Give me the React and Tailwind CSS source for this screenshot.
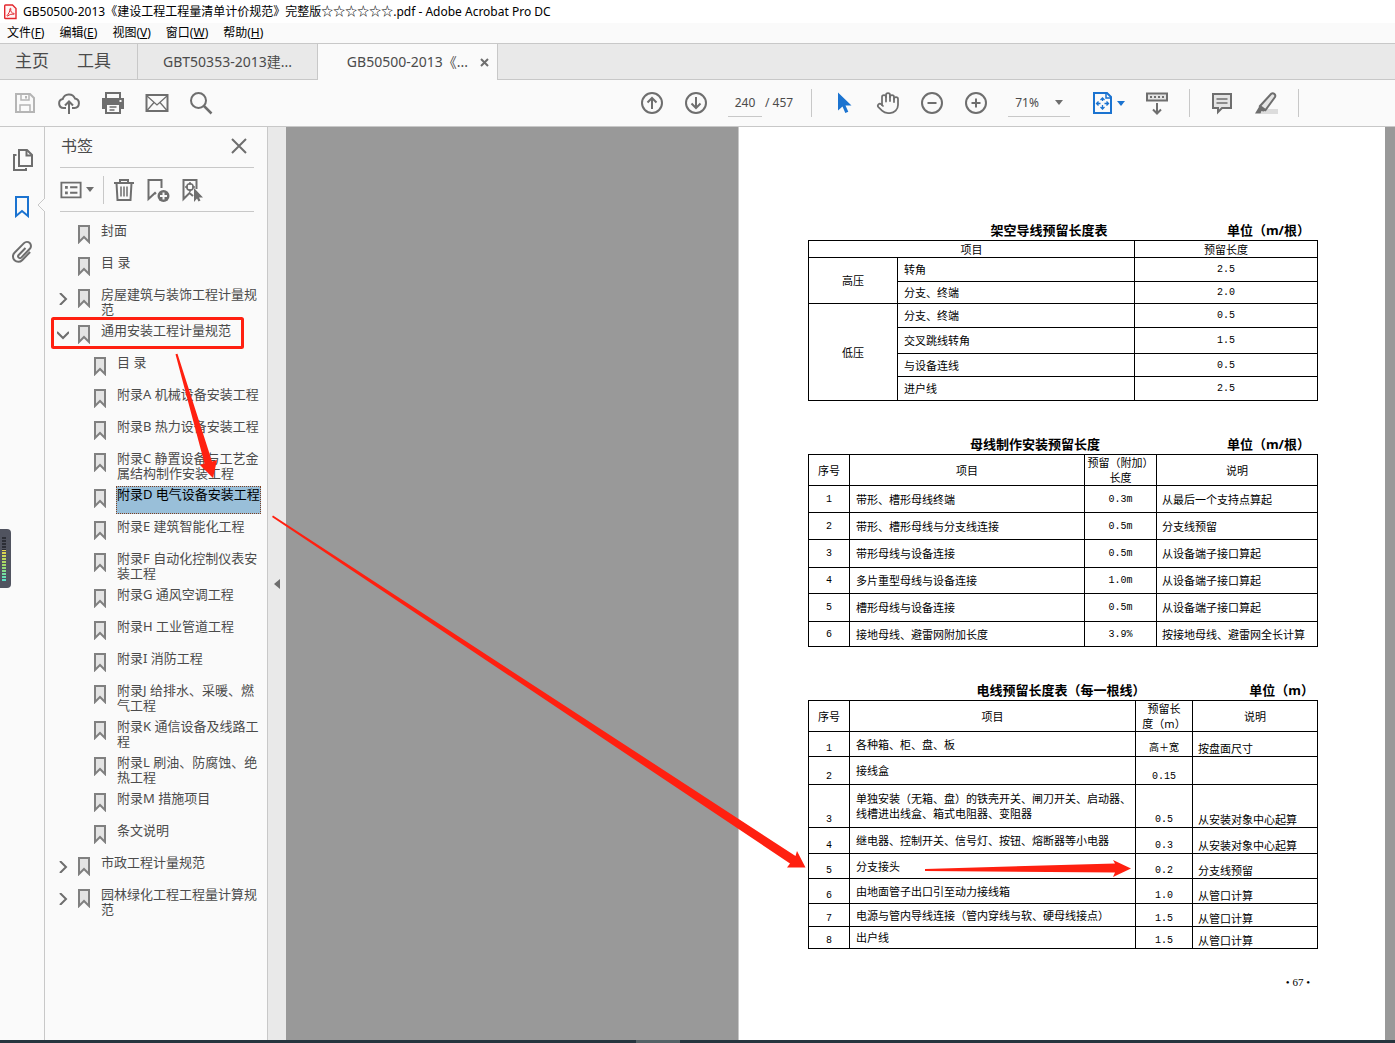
import { useState } from 'react'
import { Hand } from 'lucide-react'

const menus = [
  { label: '文件', key: 'F' },
  { label: '编辑', key: 'E' },
  { label: '视图', key: 'V' },
  { label: '窗口', key: 'W' },
  { label: '帮助', key: 'H' },
]

const bookmarks = [
  { title: '封面' },
  { title: '目 录' },
  { title: '房屋建筑与装饰工程计量规范', arrow: 'right' },
  { title: '通用安装工程计量规范', arrow: 'down' },
  { title: '目 录', child: true },
  { title: '附录A 机械设备安装工程', child: true },
  { title: '附录B 热力设备安装工程', child: true },
  { title: '附录C 静置设备与工艺金属结构制作安装工程', child: true },
  { title: '附录D 电气设备安装工程', child: true },
  { title: '附录E 建筑智能化工程', child: true },
  { title: '附录F 自动化控制仪表安装工程', child: true },
  { title: '附录G 通风空调工程', child: true },
  { title: '附录H 工业管道工程', child: true },
  { title: '附录I 消防工程', child: true },
  { title: '附录J 给排水、采暖、燃气工程', child: true },
  { title: '附录K 通信设备及线路工程', child: true },
  { title: '附录L 刷油、防腐蚀、绝热工程', child: true },
  { title: '附录M 措施项目', child: true },
  { title: '条文说明', child: true },
  { title: '市政工程计量规范', arrow: 'right' },
  { title: '园林绿化工程工程量计算规范', arrow: 'right' },
]

const overhead = [
  { group: '高压', span: 2, name: '转角', value: '2.5', h: 'h-6' },
  { name: '分支、终端', value: '2.0', h: 'h-[22px]' },
  { group: '低压', span: 4, name: '分支、终端', value: '0.5', h: 'h-6' },
  { name: '交叉跳线转角', value: '1.5', h: 'h-[26px]' },
  { name: '与设备连线', value: '0.5', h: 'h-[23px]' },
  { name: '进户线', value: '2.5', h: 'h-6' },
]

const busbar = [
  { name: '带形、槽形母线终端', value: '0.3m', note: '从最后一个支持点算起', h: 'h-[27px]' },
  { name: '带形、槽形母线与分支线连接', value: '0.5m', note: '分支线预留', h: 'h-[27px]' },
  { name: '带形母线与设备连接', value: '0.5m', note: '从设备端子接口算起', h: 'h-7' },
  { name: '多片重型母线与设备连接', value: '1.0m', note: '从设备端子接口算起', h: 'h-[26px]' },
  { name: '槽形母线与设备连接', value: '0.5m', note: '从设备端子接口算起', h: 'h-7' },
  { name: '接地母线、避雷网附加长度', value: '3.9%', note: '按接地母线、避雷网全长计算', h: 'h-[25px]' },
]

const wires = [
  { name: '各种箱、柜、盘、板', value: '高＋宽', note: '按盘面尺寸', h: 'h-[25px]' },
  { name: '接线盒', value: '0.15', note: '', h: 'h-7' },
  { name: '单独安装（无箱、盘）的铁壳开关、闸刀开关、启动器、线槽进出线盒、箱式电阻器、变阻器', value: '0.5', note: '从安装对象中心起算', h: 'h-[43px]' },
  { name: '继电器、控制开关、信号灯、按钮、熔断器等小电器', value: '0.3', note: '从安装对象中心起算', h: 'h-[26px]' },
  { name: '分支接头', value: '0.2', note: '分支线预留', h: 'h-[25px]' },
  { name: '由地面管子出口引至动力接线箱', value: '1.0', note: '从管口计算', h: 'h-[25px]' },
  { name: '电源与管内导线连接（管内穿线与软、硬母线接点）', value: '1.5', note: '从管口计算', h: 'h-[23px]' },
  { name: '出户线', value: '1.5', note: '从管口计算', h: 'h-[22px]' },
]

const TABLE = 'w-full table-fixed border-collapse text-[11px] leading-[15px]'
const CELL = 'border border-black p-0 font-normal'
const NUM = "border border-black p-0 text-center font-['Liberation_Mono','Noto_Sans_CJK_SC',monospace] text-[10px]"

function Icon({ className = 'size-6', children }) {
  return (
    <svg viewBox="0 0 24 24" className={className} fill="none" stroke="currentColor" strokeWidth="2" aria-hidden="true">
      {children}
    </svg>
  )
}

function ToolButton({ label, className = '', children }) {
  return (
    <button type="button" aria-label={label} className={`flex shrink-0 items-center justify-center ${className}`}>
      {children}
    </button>
  )
}

function Caret({ className = '' }) {
  return (
    <svg viewBox="0 0 8 5" className={`h-[5px] w-2 ${className}`} fill="currentColor" aria-hidden="true">
      <path d="M0 0h8L4 5z" />
    </svg>
  )
}

function TitleBar() {
  return (
    <header className="flex h-[23px] items-center gap-1.5 bg-white pl-1 text-xs text-black">
      <svg viewBox="0 0 13 16" className="h-4 w-[13px]" aria-hidden="true">
        <path d="M1.5 1h7l3.5 3.500v10H1.500a.8.8 0 0 1-.8-.8V1.800a.8.8 0 0 1 .8-.8z" fill="#fff5f5" stroke="#e3262d" strokeWidth="1.400" />
        <path d="M3 11.500c1.500-1.500 3-4 3-6.500 0-1 1-1 .8.200-.6 2.300 1 4 3 4.200.9.200.7 1-.2.900-2-.4-4 .2-5.600 1.500-.7.500-1.300 0-1-.3z" fill="none" stroke="#e3262d" strokeWidth="1" />
      </svg>
      <h1 className="whitespace-nowrap">GB50500-2013《建设工程工程量清单计价规范》完整版☆☆☆☆☆☆.pdf - Adobe Acrobat Pro DC</h1>
    </header>
  )
}

function MenuBar() {
  return (
    <nav className="flex h-5 items-center gap-[15px] bg-[#fafafa] pl-[7px] text-xs text-black">
      {menus.map(m => (
        <button type="button" key={m.key} className="whitespace-nowrap">
          {m.label}(<span className="underline">{m.key}</span>)
        </button>
      ))}
    </nav>
  )
}

function TabBar() {
  return (
    <div className="flex h-[37px] border-t border-[#c8c8c8] bg-[#e9e9e9] text-sm text-[#4b4b4b]">
      <div className="flex w-[138px] items-center gap-7 border-r border-b border-[#c8c8c8] pl-[15px] text-[17px]">
        <button type="button">主页</button>
        <button type="button">工具</button>
      </div>
      <button type="button" className="w-[180px] border-r border-b border-[#c8c8c8] text-center whitespace-nowrap">
        GBT50353-2013建...
      </button>
      <div className="flex w-[180px] items-center justify-end gap-3 border-r border-[#c8c8c8] bg-[#fafafa] pr-2">
        <button type="button" className="whitespace-nowrap">GB50500-2013《...</button>
        <button type="button" aria-label="关闭标签">
          <svg viewBox="0 0 9 9" className="size-[9px]" stroke="#6e6e6e" strokeWidth="2" aria-hidden="true">
            <path d="M1 1l7 7M8 1L1 8" />
          </svg>
        </button>
      </div>
      <div className="flex-1 border-b border-[#c8c8c8]" />
    </div>
  )
}

function Toolbar() {
  return (
    <div className="flex h-[47px] items-center border-b border-[#c8c8c8] bg-[#fafafa] text-[#6e6e6e]">
      <div className="flex w-[640px] items-center gap-5 pl-[13px]">
        <ToolButton label="保存" className="text-[#b5b5b5]">
          <Icon>
            <path d="M3 3h14l4 4v14H3z" />
            <path d="M8 3v6h8V3M7 21v-7h10v7" strokeWidth="1.500" />
            <path d="M13 5v2.500" />
          </Icon>
        </ToolButton>
        <ToolButton label="上传">
          <Icon>
            <path d="M9 17H6.500a4.500 4.500 0 0 1-.8-8.900A6.500 6.500 0 0 1 18 7.500a4.800 4.800 0 0 1-.5 9.500H15" />
            <path d="M12 23V11M8 14.500l4-4 4 4" />
          </Icon>
        </ToolButton>
        <ToolButton label="打印">
          <Icon>
            <path d="M5 7V2h14v5" fill="#fafafa" />
            <path d="M1 7h22v11H1z" fill="currentColor" stroke="none" />
            <path d="M5 13h14v9H5z" fill="#fafafa" />
            <path d="M8.500 16h7M8.500 19h5" strokeWidth="1.500" />
            <path d="M18.500 10h2" stroke="#fafafa" />
          </Icon>
        </ToolButton>
        <ToolButton label="电子邮件">
          <Icon>
            <path d="M1.500 4h21v16h-21z" />
            <path d="M2 5l10 9 10-9M2 19.500l7-8M22 19.500l-7-8" strokeWidth="1.300" />
          </Icon>
        </ToolButton>
        <ToolButton label="查找">
          <Icon>
            <circle cx="9.500" cy="9.500" r="7.500" />
            <path d="M15 15l7.500 7.500" strokeWidth="2.500" />
          </Icon>
        </ToolButton>
      </div>

      <div className="flex items-center gap-5">
        <ToolButton label="上一页">
          <Icon>
            <circle cx="12" cy="12" r="10" />
            <path d="M12 18V7M7.500 11.500L12 7l4.500 4.500" />
          </Icon>
        </ToolButton>
        <ToolButton label="下一页">
          <Icon>
            <circle cx="12" cy="12" r="10" />
            <path d="M12 6v11M7.500 12.500L12 17l4.500-4.500" />
          </Icon>
        </ToolButton>
        <div className="flex items-center gap-[3px] text-xs text-[#4b4b4b]">
          <input aria-label="页码" defaultValue="240" className="h-7 w-[34px] border-b border-[#c8c8c8] bg-transparent text-center" />
          <span className="whitespace-nowrap">/ 457</span>
        </div>
      </div>
      <span className="mr-5 ml-[18px] h-7 w-px shrink-0 bg-[#c8c8c8]" />
      <div className="flex items-center gap-5">
        <ToolButton label="选择工具" className="text-[#1b73d0]">
          <Icon>
            <path d="M6 1.500v18l4.500-4 2.800 6.500 3-1.300-2.800-6.200h6z" fill="currentColor" stroke="none" />
          </Icon>
        </ToolButton>
        <ToolButton label="抓手工具">
          <Hand className="size-6" strokeWidth={1.75} />
        </ToolButton>
        <ToolButton label="缩小">
          <Icon>
            <circle cx="12" cy="12" r="10" />
            <path d="M7.500 12h9" />
          </Icon>
        </ToolButton>
        <ToolButton label="放大">
          <Icon>
            <circle cx="12" cy="12" r="10" />
            <path d="M7.500 12h9M12 7.500v9" />
          </Icon>
        </ToolButton>
        <button type="button" className="flex h-7 w-[62px] items-center justify-between border-b border-[#c8c8c8] px-[7px] text-xs text-[#4b4b4b]">
          71%
          <Caret className="text-[#6e6e6e]" />
        </button>
        <button type="button" aria-label="适合页面" className="ml-px flex items-center gap-0.5 text-[#1b73d0]">
          <Icon>
            <path d="M3 2h13l4 4v16H3z" />
            <path d="M15 2v5h5" strokeWidth="1.500" />
            <path d="M11.500 7v3M11.500 14v4M5.500 12.500h4M13.500 12.500h4M9.500 9l2-2 2 2M9.500 16l2 2 2-2M7.500 10.500l-2 2 2 2M15.500 10.500l2 2-2 2" strokeWidth="1.300" />
          </Icon>
          <Caret />
        </button>
        <ToolButton label="滚动模式">
          <Icon>
            <path d="M2 2.500h20v7H2z" fill="#e4e4e4" />
            <path d="M5 6h14" strokeDasharray="2 2" />
            <path d="M12 12v10M8 18.500l4 4 4-4" />
          </Icon>
        </ToolButton>
      </div>
      <span className="mx-5 h-7 w-px shrink-0 bg-[#c8c8c8]" />
      <div className="flex items-center gap-5">
        <ToolButton label="批注">
          <Icon>
            <path d="M3 3h18v14h-9l-4 4v-4H3z" fill="#e4e4e4" />
            <path d="M6.500 8h11M6.500 12h11" strokeWidth="1.500" />
          </Icon>
        </ToolButton>
        <ToolButton label="荧光笔">
          <Icon>
            <path d="M9 18h15v5H6z" fill="#dcdcdc" stroke="none" />
            <path d="M6 15L17 3c2.200-1.800 5.200.5 4 3L11.500 19z" fill="#e4e4e4" />
            <path d="M5.500 15l6.500 4.500-2.500 1-2-.5-1 2.500H1z" fill="currentColor" stroke="none" />
          </Icon>
        </ToolButton>
      </div>
      <span className="ml-5 h-7 w-px shrink-0 bg-[#c8c8c8]" />
    </div>
  )
}

function Rail() {
  return (
    <aside className="relative flex w-[45px] shrink-0 flex-col items-center gap-[22px] border-r border-[#c8c8c8] bg-[#fafafa] pt-[21px] text-[#6e6e6e]">
      <ToolButton label="页面缩略图">
        <Icon>
          <path d="M9 2h8l5 5v11H9z" />
          <path d="M16.500 2v5.500H22M6.500 7H4v15h12v-2" />
        </Icon>
      </ToolButton>
      <ToolButton label="书签" className="text-[#1b73d0]">
        <Icon>
          <path d="M6 3h12v19l-6-5-6 5z" />
        </Icon>
      </ToolButton>
      <ToolButton label="附件">
        <Icon>
          <path d="M15.500 8l-6.800 7a1.800 1.800 0 0 0 2.600 2.600l8.500-8.800a4 4 0 0 0-5.800-5.700L4.500 12.700a5.300 5.300 0 0 0 7.600 7.500l8-8.200" />
        </Icon>
      </ToolButton>
      <svg viewBox="0 0 8 14" className="absolute top-[71px] -right-px h-3.5 w-2" aria-hidden="true">
        <path d="M8 0L1 7l7 7" fill="#fafafa" stroke="#c8c8c8" />
      </svg>
      {/* level meter docked on the screen edge */}
      <div className="absolute top-[402px] left-0 flex h-[59px] w-[11px] items-center justify-end rounded-r bg-[#50535f] pr-[5px]">
        <div className="h-[46px] w-1 bg-[repeating-linear-gradient(to_bottom,#50535f_0_1px,transparent_1px_3px),linear-gradient(to_bottom,#2c2e36_0_14px,#e8d24a_14px,#9bdc6c_30px,#4fe0d0)]" />
      </div>
    </aside>
  )
}

function BookmarkRow({ item, selected, onSelect }) {
  return (
    <li className={`mb-1 flex items-start ${item.child ? 'pl-12' : 'pl-8'}`}>
      <span className="relative shrink-0">
        {item.arrow && (
          <svg viewBox="0 0 12 12" className="absolute top-[7px] -left-5 size-3" fill="none" stroke="#6e6e6e" strokeWidth="2" aria-hidden="true">
            <path d={item.arrow === 'down' ? 'M0 3l6 6 6-6' : 'M3 0l6 6-6 6'} />
          </svg>
        )}
        <svg viewBox="0 0 14 20" className="mt-0.5 h-5 w-3.5" fill="#e4e4e4" stroke="#808080" strokeWidth="2" aria-hidden="true">
          <path d="M2 2h10v16l-5-5-5 5z" />
        </svg>
      </span>
      <button
        type="button"
        onClick={onSelect}
        className={`ml-[9px] flex min-h-7 items-start border border-dotted text-left text-[13px] leading-[15px] ${item.child ? 'w-[145px]' : 'w-[161px]'} ${selected ? 'border-[#804020] bg-[#99bfd9] text-black' : 'border-transparent text-[#4b4b4b]'}`}
      >
        {item.title}
      </button>
    </li>
  )
}

function BookmarkPanel() {
  const [selected, setSelected] = useState(8)

  return (
    <section className="w-[223px] shrink-0 border-r border-[#c8c8c8] bg-[#fafafa] text-[#6e6e6e]">
      <div className="mr-[13px] ml-[15px] flex h-[41px] items-center justify-between border-b border-[#c8c8c8] pr-[7px] pb-0.5 pl-px">
        <h2 className="text-base text-[#4b4b4b]">书签</h2>
        <button type="button" aria-label="关闭">
          <svg viewBox="0 0 16 16" className="size-4" stroke="currentColor" strokeWidth="2" aria-hidden="true">
            <path d="M1 1l14 14M15 1L1 15" />
          </svg>
        </button>
      </div>
      <div className="mr-[13px] ml-[15px] flex h-11 items-center border-b border-[#c8c8c8]">
        <button type="button" aria-label="选项" className="flex items-center gap-1">
          <Icon className="h-6 w-[22px]">
            <path d="M1.500 4h21v16h-21z" />
            <path d="M5.500 9h3M5.500 15h3" strokeWidth="3" />
            <path d="M11 9h8M11 15h8" />
          </Icon>
          <Caret />
        </button>
        <span className="mr-2 ml-[9px] h-7 w-px bg-[#c8c8c8]" />
        <div className="flex items-center gap-2.5">
          <ToolButton label="删除书签">
            <Icon>
              <path d="M2 5h20M8 5V2h8v3M4.500 5l1 17h13l1-17" />
              <path d="M9 8.500v10M12 8.500v10M15 8.500v10" strokeWidth="1.500" />
            </Icon>
          </ToolButton>
          <ToolButton label="新建书签">
            <Icon>
              <path d="M10 16l-1-1-6.500 6V2h13v8" />
              <circle cx="17.500" cy="18" r="6" fill="currentColor" stroke="none" />
              <path d="M14 18h7M17.500 14.500v7" stroke="#fafafa" />
            </Icon>
          </ToolButton>
          <ToolButton label="定位书签">
            <Icon>
              <path d="M13 18l-3.500-3-6 6V2h13v9" />
              <circle cx="10" cy="9" r="3.200" strokeWidth="1.500" />
              <path d="M10 4v3M10 11v3M5 9h3M12 9h3" strokeWidth="1.500" />
              <path d="M14 10v14l3-3.500 1.500 3 2-1-1.500-3H23z" fill="currentColor" stroke="none" />
            </Icon>
          </ToolButton>
        </div>
      </div>
      <ul className="pt-2.5">
        {bookmarks.map((item, i) => (
          <BookmarkRow key={i} item={item} selected={i === selected} onSelect={() => setSelected(i)} />
        ))}
      </ul>
    </section>
  )
}

function Caption({ title, unit, className = '', titleClass = '' }) {
  return (
    <div className={`grid h-5 grid-cols-[1fr_auto_1fr] items-center pt-px text-[13px] font-bold whitespace-nowrap ${className}`}>
      <h3 className={`col-start-2 ${titleClass}`}>{title}</h3>
      <span className="justify-self-end">{unit}</span>
    </div>
  )
}

function Page() {
  return (
    <article className="min-h-full border-l border-[#c8c8c8] bg-white pt-[93px] pr-[67px] pl-[69px] text-black">
      <Caption title="架空导线预留长度表" unit="单位（m/根）" className="pr-2" titleClass="pr-5" />
      <table className={TABLE}>
        <colgroup>
          <col className="w-[89px]" />
          <col />
          <col className="w-[183px]" />
        </colgroup>
        <thead>
          <tr className="h-[17px]">
            <th colSpan={2} className={CELL}>项目</th>
            <th className={CELL}>预留长度</th>
          </tr>
        </thead>
        <tbody>
          {overhead.map((r, i) => (
            <tr key={i} className={r.h}>
              {r.group && <td rowSpan={r.span} className={`${CELL} text-center`}>{r.group}</td>}
              <td className={`${CELL} pl-1.5`}>{r.name}</td>
              <td className={NUM}>{r.value}</td>
            </tr>
          ))}
        </tbody>
      </table>

      <Caption title="母线制作安装预留长度" unit="单位（m/根）" className="mt-[33px] pr-2" titleClass="pr-12" />
      <table className={TABLE}>
        <colgroup>
          <col className="w-[41px]" />
          <col />
          <col className="w-[72px]" />
          <col className="w-[161px]" />
        </colgroup>
        <thead>
          <tr>
            <th className={CELL}>序号</th>
            <th className={CELL}>项目</th>
            <th className={CELL}>预留（附加）<br />长度</th>
            <th className={CELL}>说明</th>
          </tr>
        </thead>
        <tbody>
          {busbar.map((r, i) => (
            <tr key={i} className={r.h}>
              <td className={NUM}>{i + 1}</td>
              <td className={`${CELL} pl-1.5`}>{r.name}</td>
              <td className={NUM}>{r.value}</td>
              <td className={`${CELL} pl-[5px]`}>{r.note}</td>
            </tr>
          ))}
        </tbody>
      </table>

      <Caption title="电线预留长度表（每一根线）" unit="单位（m）" className="mt-[33px] pr-1" />
      <table className={TABLE}>
        <colgroup>
          <col className="w-[41px]" />
          <col />
          <col className="w-[57px]" />
          <col className="w-[125px]" />
        </colgroup>
        <thead>
          <tr>
            <th className={CELL}>序号</th>
            <th className={CELL}>项目</th>
            <th className={CELL}>预留长<br />度（m）</th>
            <th className={CELL}>说明</th>
          </tr>
        </thead>
        <tbody>
          {wires.map((r, i) => (
            <tr key={i} className={r.h}>
              <td className={`${NUM} align-bottom`}>{i + 1}</td>
              <td className={`${CELL} pl-1.5`}>{r.name}</td>
              <td className={`${NUM} align-bottom`}>{r.value}</td>
              <td className={`${CELL} pl-[5px] align-bottom`}>{r.note}</td>
            </tr>
          ))}
        </tbody>
      </table>
      <p className="mt-[25px] pr-2 text-right font-['Liberation_Serif',serif] text-[11px]">• 67 •</p>
    </article>
  )
}

function Annotations() {
  return (
    <svg className="pointer-events-none absolute inset-0 size-full" fill="#ff2010" aria-hidden="true">
      <rect x="52.500" y="318.500" width="190" height="29" rx="1" fill="none" stroke="#ff2010" strokeWidth="3" />
      <path d="M175.500 354.300L177.500 353.700L212 461.400L217 460L213 478L200 465L204.500 463.600z" />
      <path d="M272 517L273 515.500L795.500 856L797 851L805.500 867.500L787 867.500L790 863.500z" />
      <path d="M925 869L1115 863.500L1113 860L1131 868.500L1113 877L1115 872.500L925 871z" />
    </svg>
  )
}

export default function App() {
  return (
    <div className="relative flex min-h-screen flex-col bg-[#fafafa] font-['Noto_Sans','Noto_Sans_CJK_SC',sans-serif]">
      <TitleBar />
      <MenuBar />
      <TabBar />
      <Toolbar />
      <main className="flex flex-1">
        <Rail />
        <BookmarkPanel />
        <button type="button" aria-label="折叠面板" className="flex w-[18px] shrink-0 items-center justify-center bg-[#e9e9e9]">
          <svg viewBox="0 0 6 10" className="h-2.5 w-1.5" fill="#6e6e6e" aria-hidden="true">
            <path d="M6 0v10L0 5z" />
          </svg>
        </button>
        <div className="flex flex-1 justify-end bg-[#999] pr-2.5">
          <div className="w-[647px]">
            <Page />
          </div>
        </div>
      </main>
      <footer className="flex h-[3px] bg-[#26353e]">
        <span className="ml-[636px] w-11 bg-[#556266]" />
      </footer>
      <Annotations />
    </div>
  )
}
